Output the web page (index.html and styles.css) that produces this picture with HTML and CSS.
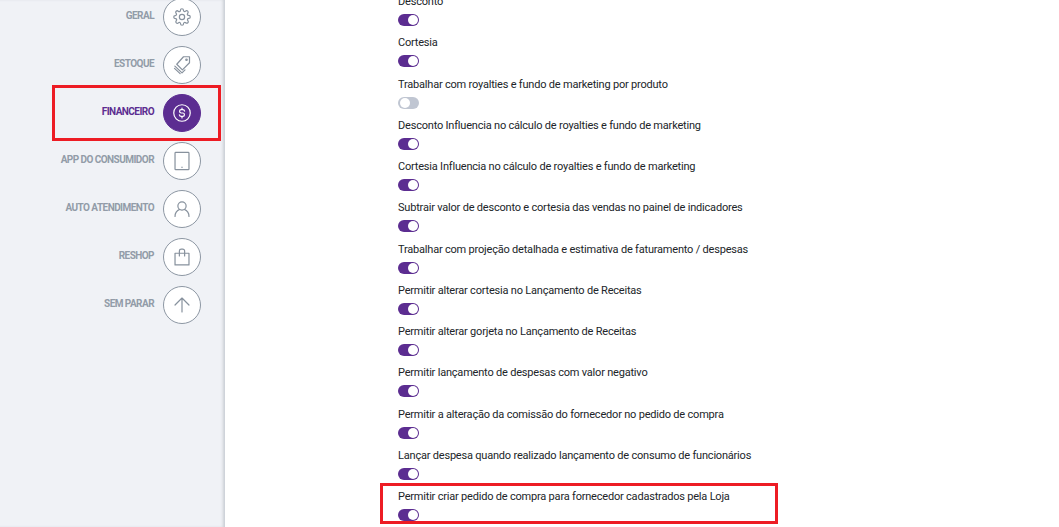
FILE: index.html
```html
<!DOCTYPE html>
<html lang="en">
<head>
    <meta charset="UTF-8">
    <meta name="viewport" content="width=device-width, initial-scale=1.0">
    <title>Parâmetros</title>
    <link rel="stylesheet" href="styles.css">
</head>
<body>
    <aside class="sidebar">
        <nav class="nav">
            <a class="nav-item">
                <span class="nav-label">GERAL</span>
                <span class="nav-icon">
                    <svg viewBox="0 0 24 24"><circle cx="12" cy="12" r="3.500"/><path d="M19.4 15a1.65 1.65 0 0 0 .33 1.82l.06.06a2 2 0 1 1-2.83 2.83l-.06-.06a1.65 1.65 0 0 0-2.82 1.17V21a2 2 0 0 1-4 0v-.09A1.65 1.65 0 0 0 7.27 19.74l-.06.06a2 2 0 1 1-2.83-2.83l.06-.06a1.65 1.65 0 0 0-1.17-2.82H3a2 2 0 0 1 0-4h.09A1.65 1.65 0 0 0 4.26 7.27l-.06-.06a2 2 0 1 1 2.83-2.83l.06.06a1.65 1.65 0 0 0 2.82-1.17V3a2 2 0 0 1 4 0v.09a1.65 1.65 0 0 0 2.82 1.17l.06-.06a2 2 0 1 1 2.83 2.83l-.06.06a1.65 1.65 0 0 0 1.17 2.82H21a2 2 0 0 1 0 4h-.09a1.65 1.65 0 0 0-1.51 1z"/></svg>
                </span>
            </a>
            <a class="nav-item">
                <span class="nav-label">ESTOQUE</span>
                <span class="nav-icon">
                    <svg viewBox="0 0 24 24"><path d="M14 1h8v8l-9.500 9.500-7.500-7.500z"/><circle cx="18" cy="5" r="1"/><path d="M2.500 13.500l9.500 9 4-4"/><path d="M2 16.500l7.500 7"/></svg>
                </span>
            </a>
            <a class="nav-item active">
                <span class="nav-label">FINANCEIRO</span>
                <span class="nav-icon">
                    <svg viewBox="0 0 24 24"><circle cx="12" cy="12" r="11"/><path d="M15.500 9.500a2.500 2.500 0 0 0-2.500-2h-2a2.250 2.250 0 0 0 0 4.500h2a2.250 2.250 0 0 1 0 4.500h-2a2.500 2.500 0 0 1-2.500-2M12 5.500v2M12 16.500v2"/></svg>
                </span>
            </a>
            <a class="nav-item">
                <span class="nav-label">APP DO CONSUMIDOR</span>
                <span class="nav-icon">
                    <svg viewBox="0 0 24 24"><rect x="2.700" y="0.500" width="18.600" height="23" rx="1"/><path d="M12 20v.5"/></svg>
                </span>
            </a>
            <a class="nav-item">
                <span class="nav-label">AUTO ATENDIMENTO</span>
                <span class="nav-icon">
                    <svg viewBox="0 0 24 24"><circle cx="12" cy="8" r="5.500"/><path d="M2.700 22c0-4.500 2.300-8 6.300-9.500M21.300 22c0-4.500-2.300-8-6.300-9.500"/></svg>
                </span>
            </a>
            <a class="nav-item">
                <span class="nav-label">RESHOP</span>
                <span class="nav-icon">
                    <svg viewBox="0 0 24 24"><path d="M2.700 7h18.600v15.500H2.700z"/><path d="M8.500 10.500V4a2.500 2.500 0 0 1 2.500-2.500h2A2.500 2.500 0 0 1 15.500 4v6.500"/></svg>
                </span>
            </a>
            <a class="nav-item">
                <span class="nav-label">SEM PARAR</span>
                <span class="nav-icon">
                    <svg viewBox="0 0 24 24"><path d="M12 21.300V2.700M2.700 12 12 2.700 21.300 12"/></svg>
                </span>
            </a>
        </nav>
        <div class="highlight highlight-nav"></div>
    </aside>

    <main class="content">
        <div class="options">
            <div class="option"><label>Desconto</label><span class="toggle on"></span></div>
            <div class="option"><label>Cortesia</label><span class="toggle on"></span></div>
            <div class="option"><label>Trabalhar com royalties e fundo de marketing por produto</label><span class="toggle"></span></div>
            <div class="option"><label>Desconto Influencia no cálculo de royalties e fundo de marketing</label><span class="toggle on"></span></div>
            <div class="option"><label>Cortesia Influencia no cálculo de royalties e fundo de marketing</label><span class="toggle on"></span></div>
            <div class="option"><label>Subtrair valor de desconto e cortesia das vendas no painel de indicadores</label><span class="toggle on"></span></div>
            <div class="option"><label>Trabalhar com projeção detalhada e estimativa de faturamento / despesas</label><span class="toggle on"></span></div>
            <div class="option"><label>Permitir alterar cortesia no Lançamento de Receitas</label><span class="toggle on"></span></div>
            <div class="option"><label>Permitir alterar gorjeta no Lançamento de Receitas</label><span class="toggle on"></span></div>
            <div class="option"><label>Permitir lançamento de despesas com valor negativo</label><span class="toggle on"></span></div>
            <div class="option"><label>Permitir a alteração da comissão do fornecedor no pedido de compra</label><span class="toggle on"></span></div>
            <div class="option"><label>Lançar despesa quando realizado lançamento de consumo de funcionários</label><span class="toggle on"></span></div>
            <div class="option"><label>Permitir criar pedido de compra para fornecedor cadastrados pela Loja</label><span class="toggle on"></span></div>
        </div>
        <div class="highlight highlight-option"></div>
    </main>
</body>
</html>
```

FILE: styles.css
```css
html, body {
    height: 100%;
}
body {
    margin: 0;
    display: flex;
    overflow: hidden;
    background-color: #ffffff;
    font-family: Roboto, "Liberation Sans", sans-serif;
}
.sidebar {
    position: relative;
    flex: 0 0 225px;
    box-sizing: border-box;
    background-color: #f0f2f6;
    box-shadow: inset -3px 0 3px -1px rgba(90, 100, 115, 0.25);
}
.nav {
    display: flex;
    flex-direction: column;
    gap: 10px;
    margin-top: -2px;
    padding-right: 24px;
}
.nav-item {
    display: flex;
    justify-content: flex-end;
    gap: 9px;
    height: 38px;
}
.nav-label {
    margin-top: 11px;
    font-family: Roboto, sans-serif;
    font-size: 10px;
    line-height: 14px;
    font-weight: 700;
    letter-spacing: -0.55px;
    color: #929ca8;
}
.nav-icon {
    flex: 0 0 38px;
    box-sizing: border-box;
    display: flex;
    align-items: center;
    justify-content: center;
    border: 1px solid #8d97a3;
    border-radius: 50%;
    background-color: #ffffff;
}
.nav-icon svg {
    width: 18px;
    height: 18px;
    overflow: visible;
    fill: none;
    stroke: #87919d;
    stroke-width: 1.6;
    stroke-linecap: round;
    stroke-linejoin: round;
}
.nav-item.active .nav-label {
    color: #5c2d91;
}
.nav-item.active .nav-icon {
    background-color: #5c2d91;
    border-color: #5c2d91;
}
.nav-item.active .nav-icon svg {
    stroke: #ffffff;
}
.highlight {
    position: absolute;
    box-sizing: border-box;
    border: 3px solid #ed1c24;
}
.highlight-nav {
    left: 52px;
    top: 85px;
    width: 169px;
    height: 56px;
}
.content {
    position: relative;
    flex: 1;
}
.options {
    margin-top: -7px;
    padding-left: 173px;
}
.option {
    box-sizing: border-box;
    height: 41.25px;
    padding-top: 1px;
}
.option label {
    display: block;
    font-size: 11px;
    line-height: 15px;
    letter-spacing: -0.2px;
    color: #212529;
}
.toggle {
    display: block;
    position: relative;
    width: 21px;
    height: 12px;
    margin-top: 5px;
    border-radius: 6px;
    background-color: #c0c6d2;
}
.toggle::after {
    content: "";
    position: absolute;
    top: 1px;
    left: 1.500px;
    width: 10px;
    height: 10px;
    border-radius: 50%;
    background-color: #ffffff;
}
.toggle.on {
    background-color: #5c2d91;
}
.toggle.on::after {
    left: 9.500px;
}
.highlight-option {
    left: 155px;
    top: 483px;
    width: 398px;
    height: 41px;
}
```
